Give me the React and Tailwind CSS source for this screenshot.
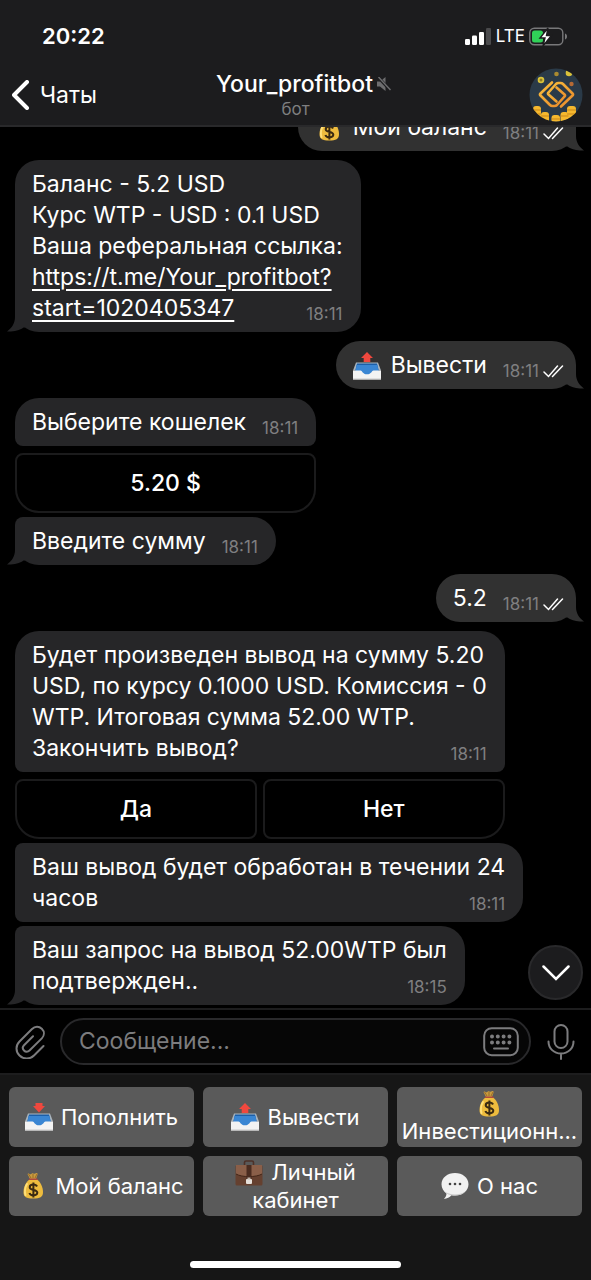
import React from 'react';

function Money({ className }) {
  return (
    <svg viewBox="0 0 28 28" className={className} aria-hidden="true">
      <path d="M8.5 2c1-1.5 2.3.5 3.3.2 1-.5 1.500-1.400 2.600-.7 1 .6 1.800.2 2.700-.4 1-.4 1.900.5 1.500 1.500L17 7h-6z" fill="#c99b3f" />
      <path d="M9.500 2l2.500 4M14 2v4M18 2l-2 4" stroke="#8a6122" strokeWidth="0.8" />
      <path d="M11 7h6.500c4 3 6.500 8 6.500 13 0 5-3 6.500-9.800 6.500S4.500 25 4.500 20c0-5 2.500-10 6.500-13z" fill="#eebc3e" />
      <path d="M8 12c-2 3-2.500 8-1.500 11" stroke="#ffe07a" strokeWidth="2" fill="none" strokeLinecap="round" />
      <path d="M10.500 7.200h7.500" stroke="#b0493d" strokeWidth="1.6" strokeLinecap="round" />
      <path d="M18 14.500c-.6-1.400-2-2-3.700-2-2 0-3.600 1-3.600 2.700 0 3.800 7.600 1.700 7.600 5.400 0 1.800-1.700 2.800-3.900 2.800-2 0-3.500-.8-4-2.400M14.400 10.500v15" stroke="#3a2a12" strokeWidth="2" fill="none" />
    </svg>
  );
}

function Tray({ down, className }) {
  return (
    <svg viewBox="0 0 28 28" className={className} aria-hidden="true">
      <path d="M3 10.500h22l3 8H0z" fill="#a9b4bd" />
      <path d="M4 11.500h20l2 8H2z" fill="#1c5fa8" />
      <path d="M3.500 13h21l1.500 10H2z" fill="#3a86d3" />
      <path d="M0 18.500h7.500c1.800 0 2 3.800 6.500 3.800s4.700-3.800 6.500-3.800H28v9H0z" fill="#f3f3f3" />
      <path d="M0 26.500h28v1H0z" fill="#c9c9c9" />
      {down ? (
        <path d="M10.500 0h7v3H20l-6 6.500L8 3h2.500z" fill="#f0483e" />
      ) : (
        <path d="M14 0l6 6h-2.700v4h-6.600V6H8z" fill="#f0483e" />
      )}
    </svg>
  );
}

function Briefcase({ className }) {
  return (
    <svg viewBox="0 0 28 28" className={className} aria-hidden="true">
      <path d="M9.500 6V3.500c0-1 .6-1.500 1.500-1.500h6c1 0 1.500.6 1.500 1.500V6" stroke="#4d3027" strokeWidth="1.6" fill="none" />
      <rect x="0.5" y="6" width="27" height="20.5" rx="1.5" fill="#65402f" />
      <path d="M1 6h26v9c-6 3.500-20 3.500-26 0z" fill="#8a5f49" />
      <path d="M1 15c6 3.500 20 3.500 26 0" stroke="#432618" fill="none" />
      <rect x="11.5" y="6" width="5" height="14" fill="#4a2c20" />
      <rect x="11" y="20" width="6" height="5" rx="1" fill="#e6e0da" />
      <rect x="12.5" y="18.5" width="3" height="2" fill="#bdb4ac" />
    </svg>
  );
}

function Speech({ className }) {
  return (
    <svg viewBox="0 0 28 28" className={className} aria-hidden="true">
      <path d="M14 1C6.500 1 .5 5.800.5 12.200c0 4 2 7.200 5 9.200 0 2-1 4-2.700 5.600 3.200-.3 6-1.800 7.600-3.800 1.200.2 2.300.3 3.600.3 7.500 0 13.500-4.800 13.500-11.300S21.500 1 14 1z" fill="#f1f1f1" />
      <path d="M3 19c5 4.500 17 4.500 22 0-2.500 3-6.500 4.500-11 4.500-5 0-8.500-1.500-11-4.500z" fill="#c8c8c8" />
      <circle cx="9" cy="12" r="1.300" fill="#444" />
      <circle cx="14" cy="12" r="1.300" fill="#444" />
      <circle cx="19" cy="12" r="1.300" fill="#444" />
    </svg>
  );
}

function Avatar() {
  return (
    <svg viewBox="0 0 54 54" className="size-[54px]" role="img" aria-label="Your_profitbot">
      <defs>
        <clipPath id="avatar-clip">
          <circle cx="27" cy="27" r="26.5" />
        </clipPath>
        <linearGradient id="gold" x1="0" y1="0" x2="1" y2="1">
          <stop offset="0" stopColor="#f8bd3c" />
          <stop offset="1" stopColor="#e8892b" />
        </linearGradient>
      </defs>
      <g clipPath="url(#avatar-clip)">
        <rect width="54" height="54" fill="#2a3a48" />
        <circle cx="12" cy="12" r="3.3" fill="#d9c23a" />
        <circle cx="12" cy="12" r="1.5" fill="#8d7a24" />
        <circle cx="27.5" cy="6" r="2.3" fill="#a98a30" />
        <circle cx="40" cy="5" r="3.3" fill="#d9c23a" />
        <circle cx="42.5" cy="16" r="2.2" fill="#b56a35" />
        <g fill="none" stroke="url(#gold)" strokeWidth="2.6" strokeLinejoin="round" strokeLinecap="round">
          <path d="M23 14.500L11.500 25.500q-1 1 0 2L21 37q1 1 2.500 1h2q1.500 0 2.500-1l7.500-8.500q1-1 0-2L27.500 19.500" />
          <path d="M32 38.500L43.500 27.500q1-1 0-2L34 16q-1-1-2.500-1h-2q-1.500 0-2.500 1l-7.500 8.500q-1 1 0 2L27.500 33.500" />
        </g>
        <g fill="#f5b82e">
          <rect x="4" y="38" width="8" height="16" rx="3" />
          <rect x="12" y="44" width="8" height="11" rx="3" />
          <rect x="22.500" y="47" width="8.5" height="8" rx="3" />
          <rect x="31.500" y="44" width="8" height="11" rx="3" />
          <rect x="38" y="38" width="9" height="16" rx="3" />
        </g>
        <path d="M4 42h8M4 46h8M12 48h8M22.500 51h8.500M31.500 48h8M38 42h9M38 46h9" stroke="#c98718" strokeWidth="1" />
      </g>
    </svg>
  );
}

function Tail({ side }) {
  if (side === 'out') {
    return (
      <svg viewBox="0 0 18 24" className="absolute -right-2 bottom-0 h-6 w-[18px] text-[#313131]" aria-hidden="true">
        <path d="M0 0h10v9c0 6 3 11 8 14.500-5 .6-12.500-1-16.500-4H0z" fill="currentColor" />
      </svg>
    );
  }
  return (
    <svg viewBox="0 0 18 24" className="absolute bottom-0 -left-2 h-6 w-[18px] text-[#262628]" aria-hidden="true">
      <path d="M18 0H8v9c0 6-3 11-8 14.500 5 .6 12.500-1 16.500-4H18z" fill="currentColor" />
    </svg>
  );
}

function Checks() {
  return (
    <svg viewBox="0 0 21 13" className="h-[13px] w-[21px]" fill="none" stroke="#fff" strokeWidth="1.5" aria-hidden="true">
      <path d="M1 7l4.500 4.500L14.500 1M9.500 11.500L19.500 1" strokeLinecap="round" />
    </svg>
  );
}

function Bubble({ side = 'in', lines, time, tail, icon, className }) {
  const last = lines.length - 1;
  const look = side === 'out' ? 'self-end bg-[#313131] pr-3' : 'self-start bg-[#262628] pr-[18px]';

  return (
    <div className={`relative pt-[9px] pb-2 pl-[17px] text-[23px] leading-[31px] whitespace-nowrap text-white ${look} ${className}`}>
      {tail && <Tail side={side} />}
      {lines.slice(0, last).map((line, i) => (
        <p key={i}>{line}</p>
      ))}
      <div className="flex items-end justify-between gap-4">
        <p className="flex items-center gap-[10px]">
          {icon}
          {lines[last]}
        </p>
        <span className="flex items-center gap-1 text-[17px] leading-5 text-[#7f7f80]">
          <time>{time}</time>
          {side === 'out' && <Checks />}
        </span>
      </div>
    </div>
  );
}

function InlineButton({ className, children }) {
  return (
    <button type="button" className={`h-[60px] flex-1 border-2 border-[#1b1b1c] bg-black text-[23px] font-medium text-white ${className}`}>
      {children}
    </button>
  );
}

function ReplyKey({ children }) {
  return (
    <button type="button" className="flex h-[60px] min-w-0 items-center justify-center gap-2 rounded-md bg-[#5a5a5a] text-[22px] leading-[27px] text-white">
      {children}
    </button>
  );
}

function StatusBar() {
  return (
    <div className="flex items-center justify-between pt-5 pr-6 pl-[42px]">
      <span className="text-[22px] leading-8 font-semibold">20:22</span>
      <div className="flex items-center gap-1">
        <svg viewBox="0 0 27 17" className="h-[17px] w-[27px]" fill="#fff" aria-hidden="true">
          <rect x="0" y="11" width="5" height="6" rx="1.2" />
          <rect x="7" y="7.500" width="5" height="9.5" rx="1.2" />
          <rect x="14" y="4" width="5" height="13" rx="1.2" />
          <rect x="21" y="0" width="5" height="17" rx="1.2" fill="#4a4a4c" />
        </svg>
        <span className="text-[17px] leading-8">LTE</span>
        <svg viewBox="0 0 38 19" className="h-[19px] w-[38px]" aria-hidden="true">
          <rect x="0.8" y="1.3" width="33" height="16.4" rx="4.5" fill="none" stroke="#78787a" strokeWidth="1.4" />
          <path d="M36 6.500c1.500.6 2 1.600 2 3s-.5 2.500-2 3z" fill="#78787a" />
          <rect x="3" y="3.5" width="11" height="12" rx="2.5" fill="#30d158" />
          <path d="M19 1l-8 10h5l-2 8 8.500-10.500h-5z" fill="#fff" stroke="#1c1c1e" strokeWidth="1.4" />
        </svg>
      </div>
    </div>
  );
}

function Header() {
  return (
    <header className="border-b-2 border-[#29292b] bg-[#1c1c1e] text-white">
      <StatusBar />
      <div className="grid grid-cols-[1fr_auto_1fr] items-center pt-4 pr-2 pb-[3px] pl-3">
        <button type="button" className="flex items-center gap-[10px] justify-self-start text-[23px]">
          <svg viewBox="0 0 18 30" className="h-[30px] w-[18px]" fill="none" stroke="#fff" strokeWidth="4" strokeLinecap="round" strokeLinejoin="round" aria-hidden="true">
            <path d="M15 2L2 15l13 13" />
          </svg>
          Чаты
        </button>
        <div className="pl-3 text-center">
          <h1 className="flex items-center gap-1 text-[23px] leading-7 font-medium">
            Your_profitbot
            <svg viewBox="0 0 14 14" className="size-[14px]" fill="#6d6d6f" aria-label="Без звука">
              <path d="M0 4.500h3L8.500 0v14L3 9.500H0z" />
              <path d="M1 0l12.500 13.500" stroke="#1c1c1e" strokeWidth="3" />
              <path d="M1.500 0L13.500 13" stroke="#6d6d6f" strokeWidth="1.4" />
            </svg>
          </h1>
          <p className="pr-4 text-[17px] leading-[22px] text-[#7f7f80]">бот</p>
        </div>
        <div className="justify-self-end">
          <Avatar />
        </div>
      </div>
    </header>
  );
}

function Composer() {
  return (
    <form className="flex items-center border-y-2 border-[#1d1d1e] bg-black py-2 pr-4 pl-[15px] text-[#7c7c7e]">
      <button type="button" aria-label="Прикрепить">
        <svg viewBox="0 0 30 34" className="h-[34px] w-[30px]" fill="none" stroke="currentColor" strokeWidth="2" strokeLinecap="round" strokeLinejoin="round">
          <path d="M28.500 21L19 30.500c-4 4-10.500 4-14.500 0s-4-10 0-14L17 4c3-3 7-3 9.800-.2s2.700 6.800 0 9.600L14.500 25.500c-1.600 1.600-4 1.600-5.500 0s-1.500-3.800 0-5.300l9-9" />
        </svg>
      </button>
      <div className="ml-[15px] flex h-[47px] min-w-0 flex-1 items-center rounded-full border-2 border-[#29292b] bg-[#060606] pr-[10px] pl-[17px]">
        <input type="text" aria-label="Сообщение" placeholder="Сообщение..." className="min-w-0 flex-1 bg-transparent text-[23px] text-white outline-none placeholder:text-[#7c7c7e]" />
        <button type="button" aria-label="Клавиатура">
          <svg viewBox="0 0 36 30" className="h-[30px] w-9" fill="none" stroke="currentColor" strokeWidth="2">
            <rect x="1.2" y="1.2" width="33.6" height="27" rx="7.5" />
            <path d="M11 21.500h14" strokeLinecap="round" />
            <path d="M9 9.500h18.500M9 15.500h18.500" strokeWidth="4" strokeLinecap="round" strokeDasharray="0 5.8" />
          </svg>
        </button>
      </div>
      <button type="button" aria-label="Голосовое сообщение" className="ml-4">
        <svg viewBox="0 0 28 36" className="h-9 w-7" fill="none" stroke="currentColor" strokeWidth="2" strokeLinecap="round">
          <rect x="7.5" y="1" width="13" height="23" rx="6.5" />
          <path d="M1.500 17.500c0 7 5.500 12 12.500 12s12.500-5 12.500-12M14 29.500V35" />
        </svg>
      </button>
    </form>
  );
}

function ReplyKeyboard() {
  return (
    <div className="bg-[#161616] px-[9px] py-3">
      <div className="grid grid-cols-3 gap-[9px]">
        <ReplyKey>
          <Tray down className="size-7" />
          Пополнить
        </ReplyKey>
        <ReplyKey>
          <Tray className="size-7" />
          Вывести
        </ReplyKey>
        <ReplyKey>
          <span className="flex flex-col items-center">
            <Money className="size-7" />
            Инвестиционн...
          </span>
        </ReplyKey>
        <ReplyKey>
          <Money className="size-7" />
          Мой баланс
        </ReplyKey>
        <ReplyKey>
          <span>
            <span className="flex items-center justify-center gap-2">
              <Briefcase className="size-7" />
              Личный
            </span>
            кабинет
          </span>
        </ReplyKey>
        <ReplyKey>
          <Speech className="size-7" />
          О нас
        </ReplyKey>
      </div>
      <div className="mx-auto mt-[45px] h-[7px] w-[211px] rounded-full bg-white" />
    </div>
  );
}

function ReferralLink({ children }) {
  return (
    <a href="https://t.me/Your_profitbot?start=1020405347" className="underline decoration-2 underline-offset-4">
      {children}
    </a>
  );
}

export default function App() {
  return (
    <div className="flex h-screen flex-col bg-black font-['Inter','Noto_Sans',sans-serif]">
      <Header />
      <main className="relative flex min-h-0 flex-1 flex-col justify-end overflow-hidden px-[15px] pb-[3px]">
        <Bubble side="out" lines={['Мой баланс']} time="18:11" tail icon={<Money className="size-7" />} className="rounded-3xl" />
        <Bubble
          lines={[
            'Баланс - 5.2 USD',
            'Курс WTP - USD : 0.1 USD',
            'Ваша реферальная ссылка:',
            <ReferralLink>https://t.me/Your_profitbot?</ReferralLink>,
            <ReferralLink>start=1020405347</ReferralLink>,
          ]}
          time="18:11"
          tail
          className="mt-[9px] rounded-3xl"
        />
        <Bubble side="out" lines={['Вывести']} time="18:11" tail icon={<Tray className="size-7" />} className="mt-[9px] rounded-3xl" />
        <div className="mt-[9px] flex flex-col self-start">
          <Bubble lines={['Выберите кошелек']} time="18:11" className="rounded-t-3xl rounded-b-lg" />
          <div className="mt-[7px] flex">
            <InlineButton className="rounded-t-lg rounded-b-3xl">5.20 $</InlineButton>
          </div>
        </div>
        <Bubble lines={['Введите сумму']} time="18:11" tail className="mt-1 rounded-3xl rounded-tl-lg" />
        <Bubble side="out" lines={['5.2']} time="18:11" tail className="mt-[9px] rounded-3xl" />
        <div className="mt-[9px] flex flex-col self-start">
          <Bubble
            lines={['Будет произведен вывод на сумму 5.20', 'USD, по курсу 0.1000 USD. Комиссия - 0', 'WTP. Итоговая сумма 52.00 WTP.', 'Закончить вывод?']}
            time="18:11"
            className="rounded-t-3xl rounded-b-lg"
          />
          <div className="mt-[7px] flex gap-[6px]">
            <InlineButton className="rounded-lg rounded-bl-3xl">Да</InlineButton>
            <InlineButton className="rounded-lg rounded-br-3xl">Нет</InlineButton>
          </div>
        </div>
        <Bubble lines={['Ваш вывод будет обработан в течении 24', 'часов']} time="18:11" className="mt-1 rounded-l-lg rounded-r-3xl" />
        <Bubble lines={['Ваш запрос на вывод 52.00WTP был', 'подтвержден..']} time="18:15" tail className="mt-1 rounded-3xl rounded-tl-lg" />
        <button type="button" aria-label="Вниз" className="absolute right-2 bottom-2 flex size-[55px] items-center justify-center rounded-full border-2 border-[#29292b] bg-[#1c1c1e]">
          <svg viewBox="0 0 28 16" className="h-4 w-7" fill="none" stroke="#fff" strokeWidth="2.5" strokeLinecap="round">
            <path d="M1.500 1.500L14 14 26.500 1.500" />
          </svg>
        </button>
      </main>
      <Composer />
      <ReplyKeyboard />
    </div>
  );
}
